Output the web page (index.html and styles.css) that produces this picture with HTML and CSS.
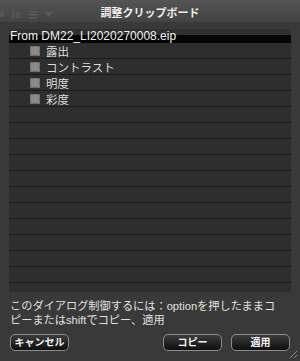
FILE: index.html
```html
<!DOCTYPE html>
<html lang="ja">
<head>
<meta charset="utf-8">
<link rel="stylesheet" href="styles.css">
</head>
<body>
<div class="window">
  <div class="titlebar">
    <div class="tools">
      <svg width="56" height="10" viewBox="0 0 56 10">
        <rect x="0" y="2" width="4" height="6" fill="#545454"/>
        <rect x="12" y="1" width="3" height="8" fill="#545454"/>
        <rect x="16" y="3" width="4" height="6" fill="#545454"/>
        <rect x="29" y="2" width="8" height="1.5" fill="#5a5a5a"/>
        <rect x="29" y="5" width="8" height="1.5" fill="#5a5a5a"/>
        <rect x="29" y="8" width="8" height="1.5" fill="#5a5a5a"/>
        <polygon points="45,3 53,3 49,8" fill="#5a5a5a"/>
      </svg>
    </div>
    <div class="title">調整クリップボード</div>
  </div>
  <div class="panel">
    <div class="header">From DM22_LI2020270008.eip</div>
    <div class="row"><span class="check"></span><span class="label">露出</span></div>
    <div class="row"><span class="check"></span><span class="label">コントラスト</span></div>
    <div class="row"><span class="check"></span><span class="label">明度</span></div>
    <div class="row"><span class="check"></span><span class="label">彩度</span></div>
    <div class="row"></div>
    <div class="row"></div>
    <div class="row"></div>
    <div class="row"></div>
    <div class="row"></div>
    <div class="row"></div>
    <div class="row"></div>
    <div class="row"></div>
    <div class="row"></div>
    <div class="row"></div>
    <div class="row"></div>
    <div class="row"></div>
  </div>
  <p class="hint">このダイアログ制御するには：optionを押したままコ<br>ピーまたはshiftでコピー、適用</p>
  <div class="buttons">
    <button class="btn">キャンセル</button>
    <span class="spacer"></span>
    <button class="btn">コピー</button>
    <button class="btn">適用</button>
  </div>
  <svg class="grip" width="9" height="9" viewBox="0 0 9 9">
    <line x1="1" y1="8" x2="8" y2="1" stroke="#8a8a8a" stroke-width="1"/>
    <line x1="5" y1="8" x2="8" y2="5" stroke="#8a8a8a" stroke-width="1"/>
  </svg>
</div>
</body>
</html>
```
FILE: styles.css
```css
* { box-sizing: border-box; }
html, body {
  margin: 0;
  padding: 0;
  background: #3a3a3a;
}
body {
  font-family: "Liberation Sans", "Noto Sans CJK JP", sans-serif;
  color: #dedede;
}
.window {
  position: relative;
  width: 300px;
  height: 361px;
  background: #393939;
  display: flex;
  flex-direction: column;
  overflow: hidden;
}
.titlebar {
  position: relative;
  height: 22px;
  background: linear-gradient(#545454, #434343);
  display: flex;
  align-items: center;
  justify-content: center;
}
.tools {
  position: absolute;
  left: 0;
  top: 9px;
  line-height: 0;
}
.title {
  font-size: 11px;
  font-weight: bold;
  color: #ececec;
  margin-top: 1px;
}
.panel {
  margin: 7px 9px 0 9px;
  height: 263px;
  flex-shrink: 0;
  background: #2e2e2e;
  overflow: hidden;
}
.header {
  height: 14px;
  background: linear-gradient(#303030 0, #303030 45%, #050505 45%, #050505 100%);
  color: #f2f2f2;
  font-size: 12px;
  line-height: 14px;
  padding-left: 1px;
  white-space: nowrap;
}
.row {
  height: 16px;
  border-bottom: 1px solid #1b1b1b;
  display: flex;
  align-items: center;
  padding-left: 21px;
}
.check {
  width: 10px;
  height: 10px;
  background: #8a8a8a;
  border: 1px solid #6e6e6e;
  margin-right: 6px;
}
.label {
  font-size: 11.5px;
  color: #dcdcdc;
}
.hint {
  margin: 7px 4px 0 10px;
  font-size: 11.2px;
  line-height: 14px;
  color: #e0e0e0;
  white-space: nowrap;
}
.buttons {
  display: flex;
  margin: 7px 10px 0 10px;
  gap: 9px;
}
.spacer { flex: 1; }
.btn {
  width: 59px;
  height: 17px;
  padding: 0;
  border: 1px solid #8c8c8c;
  border-radius: 5px;
  background: linear-gradient(#3c3c3c, #0e0e0e);
  color: #f4f4f4;
  font-family: "Liberation Sans", "Noto Sans CJK JP", sans-serif;
  font-size: 10px;
  font-weight: bold;
  line-height: 15px;
}
.grip {
  position: absolute;
  right: 2px;
  bottom: 2px;
}
```
